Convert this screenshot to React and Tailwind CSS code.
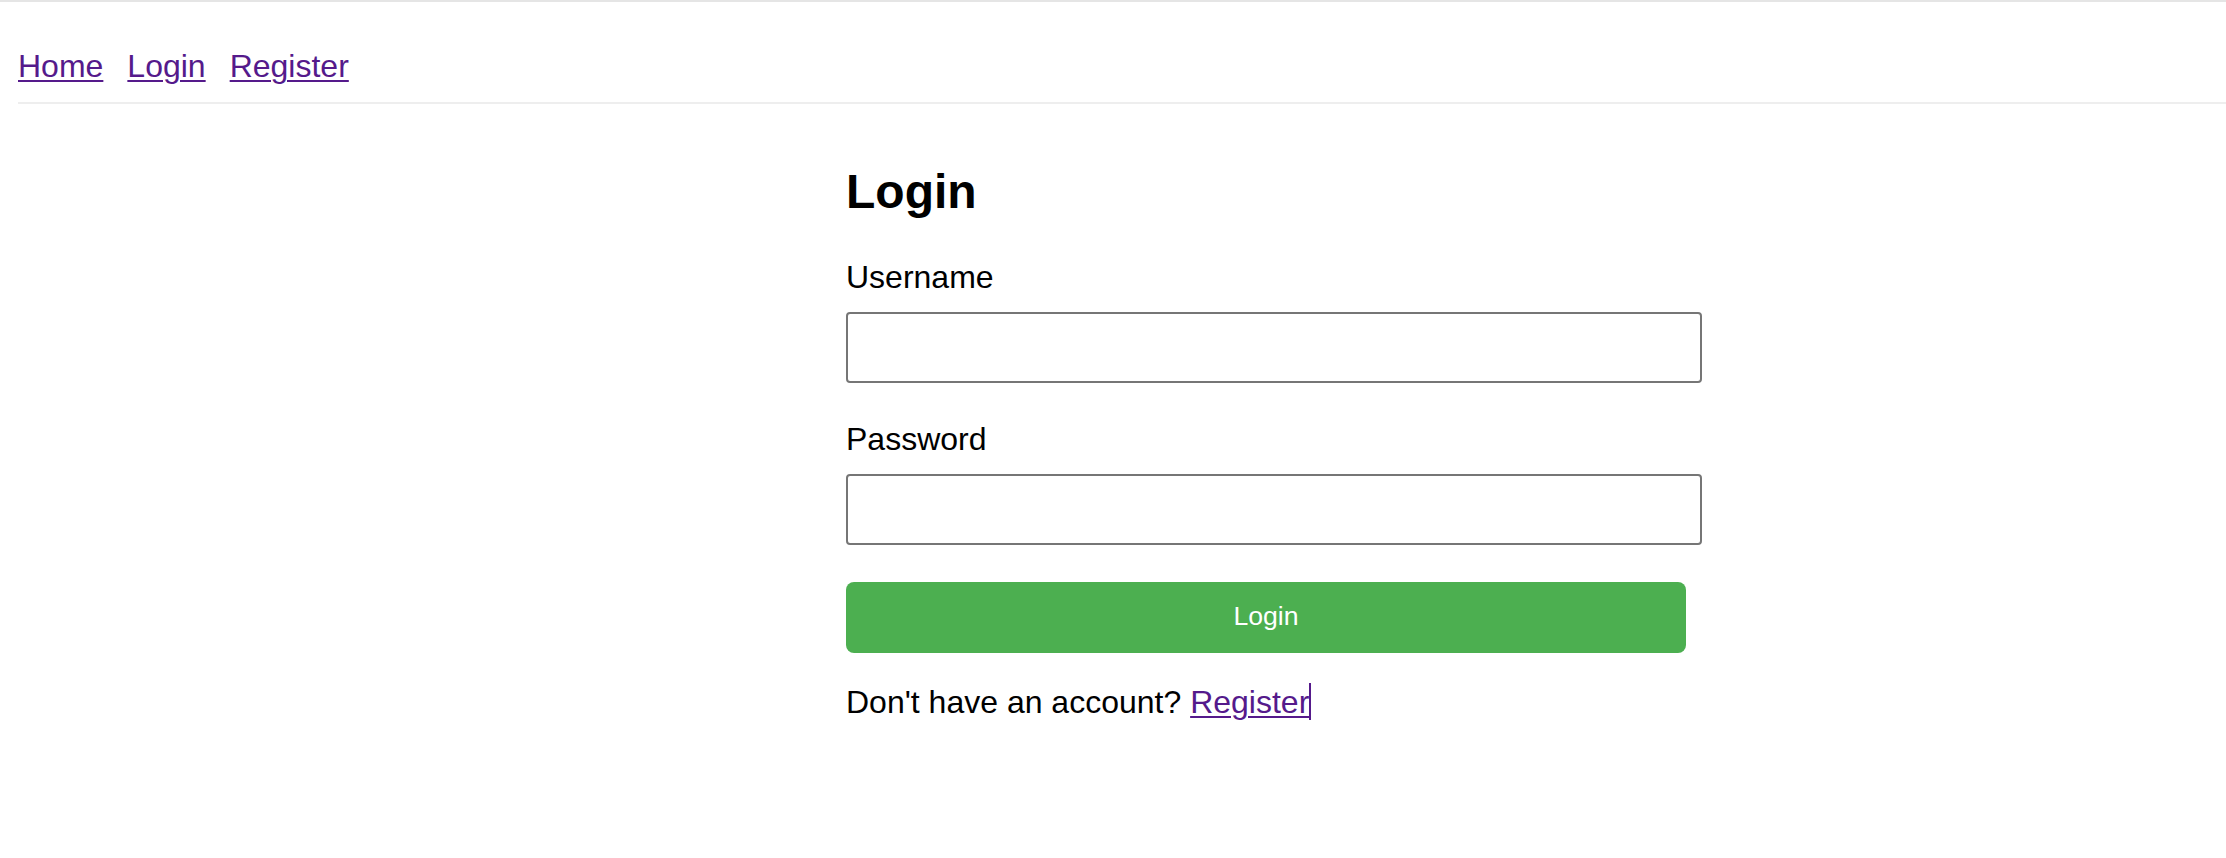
import React from 'react';

const font = { fontFamily: '"Liberation Sans", Arial, sans-serif' };

export default function App() {
  return (
    <div className="min-h-[858px] bg-white text-black" style={font}>
      <div className="h-[2px] bg-[#e5e5e5]" />

      <nav className="ml-[18px] pt-[46px] pb-[17px] border-b-2 border-[#eeeeee] flex gap-[24px] text-[32px] leading-[37px]">
        <a href="#" className="text-[#551a8b] underline decoration-2 underline-offset-[3px]">Home</a>
        <a href="#" className="text-[#551a8b] underline decoration-2 underline-offset-[3px]">Login</a>
        <a href="#" className="text-[#551a8b] underline decoration-2 underline-offset-[3px]">Register</a>
      </nav>

      <div className="ml-[846px] w-[856px] flex flex-col items-start">
        <h1 className="mt-[60px] text-[48px] leading-[55px] font-bold">Login</h1>

        <label className="mt-[40px] text-[32px] leading-[37px]">Username</label>
        <input
          type="text"
          className="mt-[16px] w-[856px] h-[71px] border-2 border-[#767676] rounded-[4px] px-3 text-[32px] outline-none"
        />

        <label className="mt-[38px] text-[32px] leading-[37px]">Password</label>
        <input
          type="password"
          className="mt-[16px] w-[856px] h-[71px] border-2 border-[#767676] rounded-[4px] px-3 text-[32px] outline-none"
        />

        <button className="mt-[37px] w-[840px] h-[71px] rounded-[8px] bg-[#4caf50] text-white text-[26.67px] leading-[31px] pb-[2px]">
          Login
        </button>

        <p className="mt-[30px] text-[32px] leading-[37px]">
          Don't have an account?{' '}
          <a href="#" className="text-[#551a8b] underline decoration-2 underline-offset-[3px]">
            Register
          </a>
          <span className="inline-block w-[2px] h-[37px] bg-[#551a8b] align-[-7px]" />
        </p>
      </div>
    </div>
  );
}
